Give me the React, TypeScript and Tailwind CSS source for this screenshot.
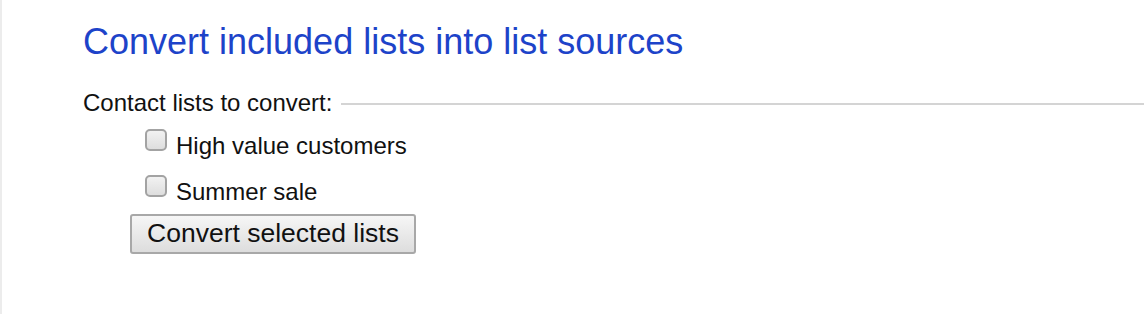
import React from "react";

function Box() {
  return (
    <span className="inline-block w-[22px] h-[22px] rounded-[5px] border-2 border-[#a3a3a3] bg-gradient-to-b from-[#f2f2f2] to-[#dedede] shrink-0" />
  );
}

export default function App() {
  return (
    <div
      className="w-[1144px] h-[314px] bg-white border-l-2 border-[#ececec] overflow-hidden"
      style={{ fontFamily: '"Liberation Sans", Arial, sans-serif' }}
    >
      <div className="pl-[81px] pt-[21px]">
        <h1 className="text-[36px] leading-[42px] text-[#1d43c9] font-normal m-0">
          Convert included lists into list sources
        </h1>
        <div className="mt-[26px] flex items-center h-[28px]">
          <span className="text-[24px] leading-[28px] text-[#111]">Contact lists to convert:</span>
          <div className="ml-[9px] mt-[2px] flex-1 h-[2px] bg-[#d4d4d4]" />
        </div>
        <div className="pl-[62px] mt-[14px] flex flex-col gap-[16px]">
          <label className="flex items-center h-[30px]">
            <span className="-mt-[6px]"><Box /></span>
            <span className="ml-[9px] text-[24px] leading-[28px] text-[#111]">High value customers</span>
          </label>
          <label className="flex items-center h-[30px]">
            <span className="-mt-[6px]"><Box /></span>
            <span className="ml-[9px] text-[24px] leading-[28px] text-[#111]">Summer sale</span>
          </label>
        </div>
        <div className="pl-[47px] mt-[7px]">
          <button className="w-[286px] h-[40px] rounded-[3px] border-2 border-[#a8a8a8] bg-gradient-to-b from-[#f6f6f6] to-[#dddddd] text-[26.5px] leading-[30px] text-[#111] flex items-center justify-center pb-[2px]">
            Convert selected lists
          </button>
        </div>
      </div>
    </div>
  );
}
